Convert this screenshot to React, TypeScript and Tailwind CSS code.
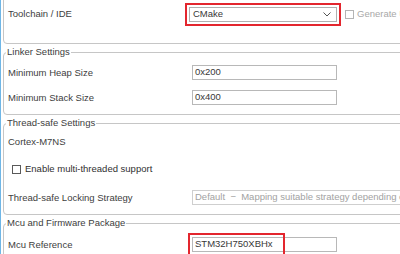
import type { ReactNode } from "react";

const font = { fontFamily: '"Liberation Sans", Arial, sans-serif' };

function Group({ title, className, children }: { title?: string; className?: string; children: ReactNode }) {
  return (
    <div className={`relative w-[420px] rounded-l-[4px] border border-[#c6c6c6] pl-[4px] ${className ?? ""}`}>
      {title && (
        <span className="absolute left-[2px] top-[-7px] bg-white px-[1px] text-[9.5px] leading-[12px] text-[#404040]">
          {title}
        </span>
      )}
      {children}
    </div>
  );
}

function Label({ children }: { children: ReactNode }) {
  return <span className="w-[184px] shrink-0 text-[9.5px] leading-[12px] text-[#404040]">{children}</span>;
}

function TextBox({ value, className }: { value: string; className?: string }) {
  return (
    <div
      className={`flex h-[15px] w-[145px] items-center border border-[#b8b8b8] bg-white pl-[2px] text-[9.5px] text-[#383838] ${className ?? ""}`}
    >
      {value}
    </div>
  );
}

export default function App() {
  return (
    <div
      className="h-[254px] w-[400px] overflow-hidden border-l border-[#6fb6e6] bg-white pl-[2px]"
      style={font}
    >
      {/* Toolchain */}
      <Group className="mt-[-10px] pb-[15px] pt-[9px]">
        <div className="flex h-[28px] items-center">
          <span className="w-[181px] shrink-0 text-[9.5px] leading-[12px] text-[#404040]">Toolchain / IDE</span>
          <div className="relative">
            <div className="flex h-[15px] w-[148px] items-center justify-between border border-[#b0b0b0] bg-white pl-[3px] pr-[4px] text-[9.5px] text-[#383838]">
              <span>CMake</span>
              <svg width="8" height="5" viewBox="0 0 8 5" className="mr-[1px]">
                <path d="M0.5 0.5 L4 4 L7.5 0.5" fill="none" stroke="#555" strokeWidth="1" />
              </svg>
            </div>
            <div className="pointer-events-none absolute inset-[-4px] border-2 border-[#e3262e]" />
          </div>
          <div className="ml-[8px] flex shrink-0 items-center gap-[3px] whitespace-nowrap text-[9.5px] text-[#a8a8a8]">
            <span className="h-[9px] w-[9px] border border-[#b4b4b4] bg-white" />
            <span>Generate Under Root</span>
          </div>
        </div>
      </Group>

      {/* Linker */}
      <Group title="Linker Settings" className="mt-[8px] pb-[9px] pt-[12px]">
        <div className="flex h-[15px] items-center">
          <Label>Minimum Heap Size</Label>
          <TextBox value="0x200" />
        </div>
        <div className="mt-[10px] flex h-[15px] items-center">
          <Label>Minimum Stack Size</Label>
          <TextBox value="0x400" />
        </div>
      </Group>

      {/* Thread-safe */}
      <Group title="Thread-safe Settings" className="mt-[8px] pb-[9px] pt-[12px]">
        <div className="flex h-[12px] items-center text-[9.5px] text-[#404040]">Cortex-M7NS</div>
        <div className="mt-[15px] flex h-[12px] items-center gap-[4px] pl-[4px] text-[9.5px] text-[#303030]">
          <span className="h-[9px] w-[9px] border border-[#5a5a5a] bg-white" />
          <span>Enable multi-threaded support</span>
        </div>
        <div className="mt-[15px] flex h-[15px] items-center">
          <Label>Thread-safe Locking Strategy</Label>
          <div className="flex h-[15px] w-[230px] shrink-0 items-center whitespace-pre border border-[#cfcfcf] pl-[2px] text-[9.5px] text-[#a2a2a2]">
            {"Default  \u2212  Mapping suitable strategy depending on RTOS selection"}
          </div>
        </div>
      </Group>

      {/* Mcu */}
      <Group title="Mcu and Firmware Package" className="mt-[8px] pt-[13px]">
        <div className="flex h-[15px] items-center">
          <Label>Mcu Reference</Label>
          <div className="relative">
            <TextBox value="STM32H750XBHx" />
            <div className="pointer-events-none absolute left-[-4px] top-[-4px] h-[23px] w-[97px] border-2 border-[#e3262e]" />
          </div>
        </div>
        <div className="h-[20px]" />
      </Group>
    </div>
  );
}
